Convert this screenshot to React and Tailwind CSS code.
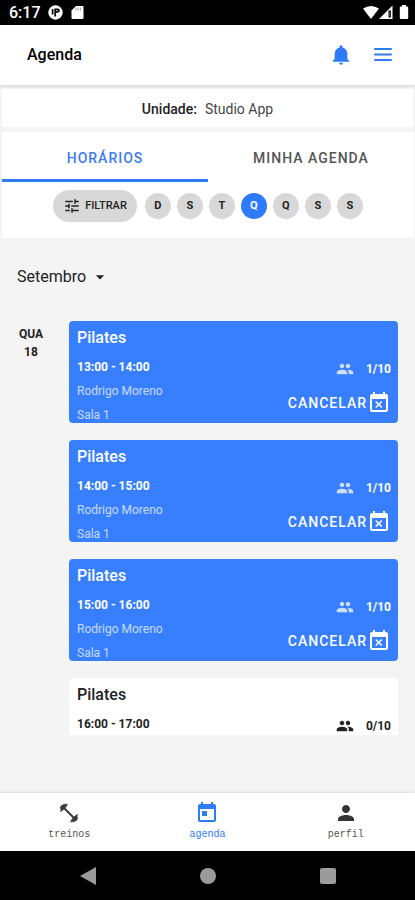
import React from 'react';
import { MdArrowDropDown, MdEventBusy, MdPerson, MdToday, MdTune } from 'react-icons/md';
import { IoMdNotifications } from 'react-icons/io';

const days = ['D', 'S', 'T', 'Q', 'Q', 'S', 'S'];
const selectedDay = 3;

const classes = [
  { time: '13:00 - 14:00', spots: '1/10', booked: true, teacher: 'Rodrigo Moreno', room: 'Sala 1' },
  { time: '14:00 - 15:00', spots: '1/10', booked: true, teacher: 'Rodrigo Moreno', room: 'Sala 1' },
  { time: '15:00 - 16:00', spots: '1/10', booked: true, teacher: 'Rodrigo Moreno', room: 'Sala 1' },
  { time: '16:00 - 17:00', spots: '0/10', booked: false }
];

function StatusBar() {
  return (
    <div className="flex h-[25px] shrink-0 items-center justify-between bg-black pr-[6px] pl-[9px] text-white">
      <div className="flex items-center">
        <span className="w-[39px] text-base font-medium">6:17</span>
        <svg className="mr-2" width="15" height="15" viewBox="0 0 15 15">
          <circle cx="7.5" cy="7.5" r="7.2" fill="white" />
          <path d="M4.6 4v5.500M7.200 11.500V4.300h2.500q1.300 0 1.300 1.300t-1.300 1.300H8" fill="none" stroke="black" strokeWidth="1.7" />
        </svg>
        <svg width="13" height="15" viewBox="0 0 13 15">
          <path d="M5 1h6.5q1 0 1 1v11q0 1-1 1h-10q-1 0-1-1V5.5z" fill="white" />
          <path d="M5 2.5v3M7.2 2.5v3M9.4 2.5v3" stroke="#999" strokeWidth="1" />
        </svg>
      </div>
      <div className="flex items-center">
        <svg width="16" height="15" viewBox="0 0 16 15">
          <path d="M0 3.6Q8-1.8 16 3.6L8 14z" fill="white" />
        </svg>
        <svg className="mr-[6px]" width="14" height="15" viewBox="0 0 14 15">
          <path d="M13.5.5v13.5H0z" fill="white" />
          <path d="M9.500 5.500h2.500v7H9.500z" fill="black" />
          <path d="M10.5 6.500h.8v5h-.8z" fill="#888" />
        </svg>
        <svg width="10" height="15" viewBox="0 0 10 15">
          <path d="M3 0h4v1.5h1.2q1 0 1 1V13q0 1-1 1H1.8q-1 0-1-1V2.5q0-1 1-1H3z" fill="white" />
        </svg>
      </div>
    </div>
  );
}

function PeopleIcon({ className }) {
  return (
    <svg width="18" height="18" viewBox="0 0 24 24" fill="currentColor" className={className}>
      <path d="M16 11c1.660 0 2.990-1.340 2.990-3S17.660 5 16 5s-3 1.340-3 3 1.340 3 3 3zM8 11c1.660 0 2.990-1.340 2.990-3S9.660 5 8 5 5 6.340 5 8s1.340 3 3 3zM8 13c-2.330 0-7 1.170-7 3.500V19h14v-2.500C15 14.170 10.330 13 8 13zM16 13c-.290 0-.620.020-.970.050 1.160.840 1.970 1.970 1.970 3.450V19h6v-2.500c0-2.330-4.670-3.500-7-3.500z" />
    </svg>
  );
}

function DumbbellIcon() {
  return (
    <svg width="24" height="24" viewBox="0 0 24 24" fill="#3a3a3a" stroke="#3a3a3a" strokeLinejoin="round">
      <path d="M7 7l10 10" strokeWidth="2" />
      <path d="M3 6.500 4.300 5.500 4 4.500 5.500 4.600 6.500 3.200 10.500 3.200 9 6 6 9 3.500 10.500 4 8z" strokeWidth=".6" />
      <path d="M21 17.500 19.700 18.500 20 19.500 18.500 19.400 17.500 20.800 13.500 20.800 15 18 18 15 20.500 13.500 20 16z" strokeWidth=".6" />
    </svg>
  );
}

function ClassCard({ item }) {
  return (
    <li
      className={`flex h-[102px] shrink-0 justify-between overflow-hidden rounded pr-[7px] pl-2 ${
        item.booked ? 'bg-[#387fff] text-white' : 'bg-white text-[#222]'
      }`}
    >
      <div className="pt-[5px] text-xs leading-6">
        <h2 className="mb-[5px] text-base leading-6 font-medium">Pilates</h2>
        <p className="leading-6 font-bold">{item.time}</p>
        {item.teacher && <p className="leading-6 opacity-70">{item.teacher}</p>}
        {item.room && <p className="leading-6 opacity-70">{item.room}</p>}
      </div>
      <div className="flex flex-col items-end gap-[10px] pt-9">
        <div className="flex h-6 items-center gap-3 text-xs font-bold">
          <PeopleIcon className={item.booked ? 'opacity-75' : ''} />
          <span>{item.spots}</span>
        </div>
        {item.booked && (
          <button type="button" className="flex h-6 items-center text-sm font-medium tracking-[1px]">
            CANCELAR
            <MdEventBusy size={24} />
          </button>
        )}
      </div>
    </li>
  );
}

export default function App() {
  return (
    <div className="flex h-screen flex-col bg-[#f4f4f4] font-['Roboto',sans-serif] text-[#222]">
      <StatusBar />

      <header className="flex h-[60px] shrink-0 items-center bg-white pr-[21px] pl-[27px] shadow-[0_2px_2px_#ddd]">
        <h1 className="flex-1 text-base font-medium text-black">Agenda</h1>
        <button type="button" aria-label="Notificações" className="mr-[19px] text-[#2e7bf6]">
          <IoMdNotifications size={24} />
        </button>
        <button type="button" aria-label="Menu" className="text-[#2e7bf6]">
          <svg width="22" height="22" viewBox="0 0 22 22" stroke="currentColor" strokeWidth="2" strokeLinecap="round">
            <path d="M3 5h16M3 10.500h16M3 16h16" />
          </svg>
        </button>
      </header>

      <p className="mx-[2px] mt-1 flex h-[38px] shrink-0 items-center justify-center gap-2 bg-white pt-px text-sm">
        <strong className="font-medium">Unidade:</strong>
        <span className="text-[#444]">Studio App</span>
      </p>

      <section className="mt-[5px] mr-px ml-[2px] h-[106px] shrink-0 bg-white">
        <div role="tablist" className="grid h-[50px] grid-cols-2 text-sm font-medium tracking-[1px]">
          <button type="button" role="tab" aria-selected="true" className="border-b-[3px] border-[#2e7bf6] pt-1 text-[#3b7cf5]">
            HORÁRIOS
          </button>
          <button type="button" role="tab" aria-selected="false" className="border-b-[3px] border-transparent pt-1 text-[#555]">
            MINHA AGENDA
          </button>
        </div>
        <div className="flex items-center justify-center gap-[6px] pt-2 text-[11px] font-bold">
          <button type="button" className="mr-[2px] flex h-8 items-center gap-1 rounded-full bg-[#d8d8d8] px-[10px] font-medium">
            <MdTune size={18} />
            FILTRAR
          </button>
          {days.map((day, idx) => (
            <button
              key={idx}
              type="button"
              aria-pressed={idx === selectedDay}
              className={`size-[26px] rounded-full ${idx === selectedDay ? 'bg-[#2e7bff] text-white' : 'bg-[#d8d8d8]'}`}
            >
              {day}
            </button>
          ))}
        </div>
      </section>

      <button type="button" className="mt-[27px] ml-[17px] flex h-6 shrink-0 items-center gap-1 self-start text-base">
        Setembro
        <MdArrowDropDown size={20} />
      </button>

      <main className="mt-8 mb-[58px] flex min-h-0 flex-1 overflow-hidden pr-[17px]">
        <div className="w-[69px] pt-1 pr-[7px] text-center text-xs leading-[18px] font-bold">
          <p>QUA</p>
          <p>18</p>
        </div>
        <ul className="flex flex-1 flex-col gap-[17px]">
          {classes.map((item) => (
            <ClassCard key={item.time} item={item} />
          ))}
        </ul>
      </main>

      <nav className="grid h-[58px] shrink-0 grid-cols-3 bg-white font-['Liberation_Mono',monospace] text-[10px] leading-4 text-[#555] shadow-[0_-1px_2px_#ddd]">
        <a href="#treinos" className="flex flex-col items-center gap-[2px] pt-2">
          <DumbbellIcon />
          treinos
        </a>
        <a href="#agenda" className="flex flex-col items-center gap-[2px] pt-2 text-[#2e7bf6]">
          <MdToday size={24} />
          agenda
        </a>
        <a href="#perfil" className="flex flex-col items-center gap-[2px] pt-2">
          <MdPerson size={24} className="text-[#333]" />
          perfil
        </a>
      </nav>

      <div className="flex h-[49px] shrink-0 items-center justify-center gap-[104px] bg-black text-[#9b9b9b]">
        <button type="button" aria-label="Voltar">
          <svg width="16" height="18" viewBox="0 0 16 18" fill="currentColor">
            <path d="M16 0v18L0 9z" />
          </svg>
        </button>
        <button type="button" aria-label="Início" className="size-4 rounded-full bg-[#9b9b9b]" />
        <button type="button" aria-label="Recentes" className="size-4 rounded-xs bg-[#9b9b9b]" />
      </div>
    </div>
  );
}
